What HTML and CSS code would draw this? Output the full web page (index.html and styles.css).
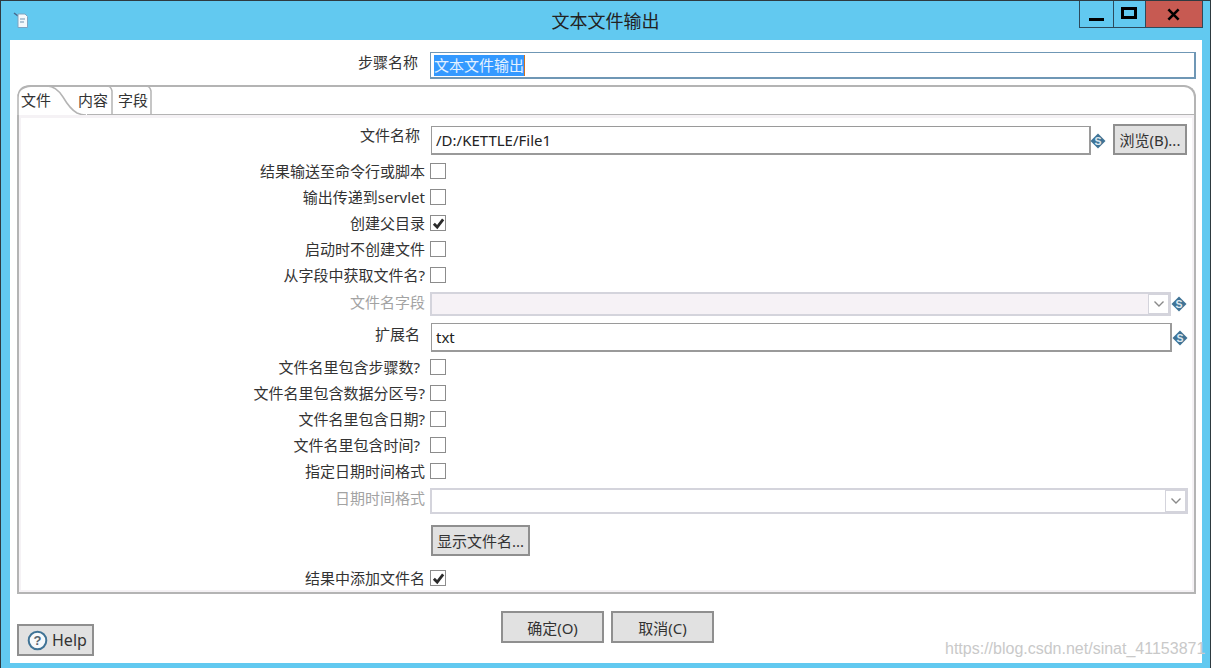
FILE: index.html
```html
<!DOCTYPE html>
<html lang="zh-CN">
<head>
  <meta charset="UTF-8">
  <title>文本文件输出</title>
  <link rel="stylesheet" href="styles.css">
</head>
<body>
  <div class="window">
    <!-- 标题栏 -->
    <header class="titlebar">
      <svg class="app-icon" width="16" height="18" viewBox="0 0 16 18">
        <path d="M1 2L5 5" stroke="#47688c" stroke-width="1.5"/>
        <path d="M5 3H12L14.500 5.500V16.500H5Z" fill="#f4f8fb" stroke="#7fa3c0"/>
        <path d="M7 8H12M7 11H11" stroke="#6f93b0"/>
      </svg>
      <h1 class="title">文本文件输出</h1>
      <div class="win-buttons">
        <div class="win-btn win-min"><span class="min-glyph"></span></div>
        <div class="win-btn win-max"><span class="max-glyph"></span></div>
        <div class="win-btn win-close">
          <svg width="13" height="13" viewBox="0 0 14 14"><path d="M1.500 1.500L12.500 12.500M12.500 1.500L1.500 12.500" stroke="#000" stroke-width="2.800"/></svg>
        </div>
      </div>
    </header>

    <div class="content">
      <div class="step-row">
        <label class="step-label">步骤名称</label>
        <div class="step-input"><span class="selected">文本文件输出</span></div>
      </div>

      <!-- 选项卡 -->
      <div class="folder">
        <div class="tabs">
          <div class="tab tab-active">文件</div>
          <div class="tab tab-second">内容</div>
          <div class="tab tab-third">字段</div>
          <svg class="tab-lines" width="140" height="31" viewBox="0 0 140 31">
            <path d="M1 30V13Q1 1 13 1H30Q39 1 46 12Q53 24 60 28Q64 30 69 30" fill="none" stroke="#b4b4b4" stroke-width="1.500"/>
            <path d="M30 1H90Q94 1 95 6V30" fill="none" stroke="#b4b4b4" stroke-width="1.500"/>
            <path d="M95 1H129Q133 1 134 6V30" fill="none" stroke="#b4b4b4" stroke-width="1.500"/>
          </svg>
        </div>
        <div class="panel">
          <div class="row row-text row-file">
            <label class="label">文件名称</label>
            <div class="input input-file">/D:/KETTLE/File1</div>
            <svg class="var" viewBox="0 0 16 16"><path d="M8 0.5L15.5 8L8 15.5L0.5 8Z" fill="#3f7396"/><text x="8" y="12" text-anchor="middle" font-size="10.5" font-weight="700" font-family="Liberation Sans, sans-serif" fill="#dce8f0">S</text></svg>
            <button class="btn btn-browse">浏览(B)...</button>
          </div>
          <div class="row row-check"><label class="label">结果输送至命令行或脚本</label><span class="checkbox"></span></div>
          <div class="row row-check"><label class="label">输出传递到servlet</label><span class="checkbox"></span></div>
          <div class="row row-check"><label class="label">创建父目录</label><span class="checkbox"><svg class="tick" viewBox="0 0 14 14"><path d="M2 7.200L5.600 10.800L12 2.600" fill="none" stroke="#2b2b2b" stroke-width="3"/></svg></span></div>
          <div class="row row-check"><label class="label">启动时不创建文件</label><span class="checkbox"></span></div>
          <div class="row row-check"><label class="label">从字段中获取文件名?</label><span class="checkbox"></span></div>
          <div class="row row-combo row-field">
            <label class="label label-off">文件名字段</label>
            <div class="combo combo-filled"><span class="combo-arrow"><svg class="chev" viewBox="0 0 12 8"><path d="M1.5 1.5L6 6L10.5 1.5" fill="none" stroke="#8a8a8a" stroke-width="1.4"/></svg></span></div>
            <svg class="var" viewBox="0 0 16 16"><path d="M8 0.5L15.5 8L8 15.5L0.5 8Z" fill="#3f7396"/><text x="8" y="12" text-anchor="middle" font-size="10.5" font-weight="700" font-family="Liberation Sans, sans-serif" fill="#dce8f0">S</text></svg>
          </div>
          <div class="row row-text row-ext">
            <label class="label label-ext">扩展名</label>
            <div class="input input-ext">txt</div>
            <svg class="var" viewBox="0 0 16 16"><path d="M8 0.5L15.5 8L8 15.5L0.5 8Z" fill="#3f7396"/><text x="8" y="12" text-anchor="middle" font-size="10.5" font-weight="700" font-family="Liberation Sans, sans-serif" fill="#dce8f0">S</text></svg>
          </div>
          <div class="row row-check"><label class="label label-q">文件名里包含步骤数?</label><span class="checkbox"></span></div>
          <div class="row row-check"><label class="label">文件名里包含数据分区号?</label><span class="checkbox"></span></div>
          <div class="row row-check"><label class="label">文件名里包含日期?</label><span class="checkbox"></span></div>
          <div class="row row-check"><label class="label label-q">文件名里包含时间?</label><span class="checkbox"></span></div>
          <div class="row row-check"><label class="label">指定日期时间格式</label><span class="checkbox"></span></div>
          <div class="row row-combo row-date">
            <label class="label label-off">日期时间格式</label>
            <div class="combo combo-date"><span class="combo-arrow"><svg class="chev" viewBox="0 0 12 8"><path d="M1.5 1.5L6 6L10.5 1.5" fill="none" stroke="#8a8a8a" stroke-width="1.4"/></svg></span></div>
          </div>
          <div class="row row-show">
            <span class="label"></span>
            <button class="btn btn-show">显示文件名...</button>
          </div>
          <div class="row row-check row-last"><label class="label">结果中添加文件名</label><span class="checkbox"><svg class="tick" viewBox="0 0 14 14"><path d="M2 7.200L5.600 10.800L12 2.600" fill="none" stroke="#2b2b2b" stroke-width="3"/></svg></span></div>
        </div>
      </div>

      <!-- 底部按钮 -->
      <footer class="actions">
        <button class="btn btn-help">
          <svg width="21" height="21" viewBox="0 0 21 21"><circle cx="10.500" cy="10.500" r="8.800" fill="#f6f9fb" stroke="#3f7396" stroke-width="2"/><text x="10.500" y="15" text-anchor="middle" font-size="13" font-weight="700" font-family="Liberation Sans, sans-serif" fill="#55646f">?</text></svg>
          <span class="help-text">Help</span>
        </button>
        <div class="actions-main">
          <button class="btn btn-action">确定(O)</button>
          <button class="btn btn-action">取消(C)</button>
        </div>
      </footer>
    </div>
    <div class="watermark">https://blog.csdn.net/sinat_41153871</div>
  </div>
</body>
</html>
```

FILE: styles.css
```css
* {
  box-sizing: border-box;
}
html, body {
  margin: 0;
  padding: 0;
  height: 100%;
  background-color: #fff;
}
body {
  font-family: "Noto Sans", "Noto Sans CJK SC", sans-serif;
  font-size: 15px;
  color: #333;
  overflow: hidden;
}
.window {
  position: relative;
  width: 1211px;
  height: 668px;
  background-color: #62c9f0;
  border: 1px solid #2e3a40;
  border-bottom: none;
  display: flex;
  flex-direction: column;
}

/* Title bar */
.titlebar {
  height: 39px;
  flex-shrink: 0;
  display: flex;
  align-items: flex-start;
  position: relative;
  justify-content: center;
}
.app-icon {
  position: absolute;
  left: 12px;
  top: 10px;
}
.title {
  margin: 9px 0 0 0;
  font-size: 18px;
  font-weight: 400;
  line-height: 22px;
  color: #222;
}
.win-buttons {
  position: absolute;
  right: 7px;
  top: 0;
  display: flex;
  height: 27px;
  border: 1px solid #2c4a5c;
  border-top: none;
}
.win-btn {
  display: flex;
  align-items: center;
  justify-content: center;
}
.win-min {
  width: 34px;
  border-right: 1px solid #2c4a5c;
}
.win-max {
  width: 32px;
  border-right: 1px solid #2c4a5c;
}
.win-close {
  width: 56px;
  padding-right: 2px;
  background-color: #c75a52;
}
.min-glyph {
  width: 15px;
  height: 3px;
  background-color: #000;
  margin-top: 10px;
}
.max-glyph {
  width: 16px;
  height: 12px;
  border: 3px solid #000;
  margin: -3px 0 0 -1px;
}

/* Content */
.content {
  flex: 1;
  margin: 0 8px 5px 9px;
  background-color: #fff;
  padding: 12px 6px 0 7px;
  display: flex;
  flex-direction: column;
}
.step-row {
  display: flex;
  align-items: center;
  height: 27px;
}
.step-label {
  width: 401px;
  text-align: right;
  padding-bottom: 9px;
}
.step-input {
  margin-left: 12px;
  flex: 1;
  height: 27px;
  border: 1px solid #6f97b5;
  border-width: 1px 2px 2px 1px;
  padding: 2px 0 0 3px;
}
.selected {
  display: inline-block;
  height: 21px;
  line-height: 20px;
  vertical-align: top;
  background-color: #3399ff;
  border-right: 1px solid #d0701f;
  color: #e3f1ff;
}

/* Tabs */
.folder {
  margin-top: 6px;
  height: 509px;
  width: 1179px;
  display: flex;
  flex-direction: column;
}
.tabs {
  position: relative;
  height: 30px;
  flex-shrink: 0;
  display: flex;
  border-top: 2px solid #b4b4b4;
  border-right: 2px solid #b4b4b4;
  border-top-left-radius: 14px;
  border-top-right-radius: 12px;
}
.tab {
  position: relative;
  line-height: 27px;
  height: 28px;
}
.tab-active {
  width: 57px;
  padding-left: 4px;
}
.tab-second {
  width: 39px;
  padding-left: 4px;
}
.tab-third {
  width: 40px;
  padding-left: 5px;
}
.tab-lines {
  position: absolute;
  left: 0;
  top: -2px;
}
.panel {
  flex: 1;
  border: 2px solid #b4b4b4;
  border-top: none;
  background-color: #fff;
  box-shadow: inset 2px 3px 0 #f5f2f5, inset -2px -2px 0 #f5f2f5;
  padding-top: 11px;
  position: relative;
}
.panel::before {
  content: "";
  position: absolute;
  left: 68px;
  right: -2px;
  top: -1px;
  height: 1px;
  background-color: #b4b4b4;
}

/* Rows */
.row {
  display: flex;
  align-items: center;
}
.label {
  width: 406px;
  flex-shrink: 0;
  text-align: right;
  line-height: 20px;
  white-space: nowrap;
}
.label-off {
  color: #a3a3a3;
}
.label-q {
  padding-right: 5px;
}
.row-check {
  height: 26px;
}
.checkbox {
  width: 16px;
  height: 16px;
  margin-left: 5px;
  border: 1.500px solid #8c8c8c;
  background-color: #fff;
  display: inline-flex;
  align-items: center;
  justify-content: center;
}
.tick {
  width: 13px;
  height: 13px;
}
.row-file {
  height: 29px;
  margin-bottom: 3px;
}
.row-file .label {
  padding: 0 5px 11px 0;
}
.input {
  height: 100%;
  margin-left: 6px;
  border: 1px solid #9a9a9a;
  border-width: 1px 2px 2px 1px;
  padding-left: 4px;
  line-height: 27px;
  color: #222;
}
.input-file {
  width: 660px;
}
.var {
  width: 16px;
  height: 16px;
  flex-shrink: 0;
}
.row-file .var {
  margin-left: -1px;
}
.btn {
  font-family: inherit;
  font-size: 15px;
  color: #333;
  background-color: #e1e1e1;
  border: 2px solid #8f8f8f;
  padding: 0;
  cursor: pointer;
}
.btn-browse {
  width: 74px;
  height: 31px;
  margin-left: 7px;
  margin-top: -3px;
}
.row-field {
  height: 24px;
  margin-top: 4px;
}
.row-field .label {
  padding-bottom: 4px;
}
.row-ext {
  height: 29px;
  margin-top: 7px;
  margin-bottom: 2px;
}
.label-ext {
  padding: 0 5px 7px 0;
}
.input-ext {
  width: 741px;
}
.combo {
  height: 100%;
  margin-left: 5px;
  border: 2px solid #d4d4dc;
  display: flex;
  justify-content: flex-end;
}
.combo-filled {
  width: 741px;
  background-color: #f6f2f6;
}
.combo-date {
  width: 758px;
  background-color: #fff;
}
.combo-arrow {
  width: 21px;
  background-color: #fff;
  border: 1.500px solid #d4d4dc;
  display: flex;
  align-items: center;
  justify-content: center;
}
.chev {
  width: 12px;
  height: 8px;
}
.row-date {
  height: 26px;
  margin-top: 4px;
}
.row-date .label {
  padding-bottom: 6px;
}
.row-show {
  margin-top: 11px;
  height: 31px;
}
.btn-show {
  margin-left: 6px;
  width: 99px;
  height: 31px;
}
.row-last {
  margin-top: 9px;
}

/* Footer */
.actions {
  position: relative;
  flex: 1;
}
.actions-main {
  display: flex;
  justify-content: center;
  gap: 7px;
  padding-top: 17px;
  padding-left: 2px;
}
.btn-action {
  width: 103px;
  height: 32px;
}
.btn-help {
  position: absolute;
  left: 0;
  top: 30px;
  width: 77px;
  height: 32px;
  display: flex;
  align-items: center;
  justify-content: flex-start;
  gap: 4px;
  padding-left: 8px;
}
.help-text {
  font-size: 16px;
}
.watermark {
  position: absolute;
  left: 944px;
  top: 638px;
  font-family: "Liberation Sans", sans-serif;
  font-size: 16px;
  line-height: 20px;
  color: #c9c9c9;
  white-space: nowrap;
}
```
